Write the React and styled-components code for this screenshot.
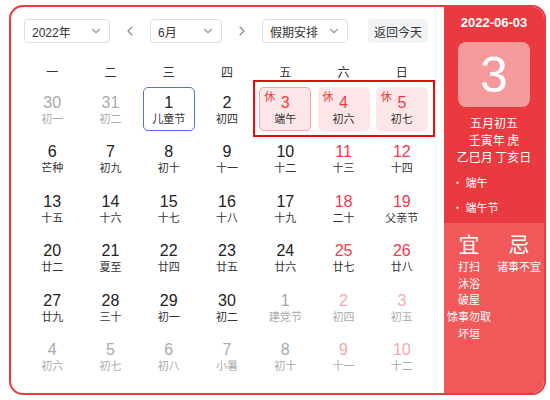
import styled, { createGlobalStyle } from "styled-components";
import { ChevronDown, ChevronLeft, ChevronRight } from "lucide-react";

const GlobalStyle = createGlobalStyle`
  body {
    margin: 0;
    background: #fff;
    font-family: "Liberation Sans", "Noto Sans CJK SC", sans-serif;
  }
`;

const Frame = styled.div`
  margin: 5px 0 0 9px;
  width: 537px;
  height: 390px;
  box-sizing: border-box;
  border: 2px solid #ea3a3f;
  border-radius: 14px;
  overflow: hidden;
  display: flex;
  background: #fff;
`;

const Main = styled.div`
  width: 433px;
  padding: 12px 0 0 12px;
  box-sizing: border-box;
`;

const Toolbar = styled.div`
  display: flex;
  align-items: center;
  height: 24px;
  padding-left: 1px;
`;

const Select = styled.div`
  width: ${({ $w }) => $w}px;
  height: 24px;
  box-sizing: border-box;
  border: 1px solid #dcdfe6;
  border-radius: 4px;
  display: flex;
  align-items: center;
  justify-content: space-between;
  padding: 0 6px 0 7px;
  font-size: 12px;
  color: #333;
  margin-right: ${({ $mr }) => $mr || 0}px;
  svg {
    color: #999;
  }
`;

const Arrow = styled.div`
  width: 40px;
  display: flex;
  justify-content: center;
  color: #888;
`;

const TodayButton = styled.div`
  width: 60px;
  height: 24px;
  border-radius: 4px;
  background: #f2f3f5;
  color: #333;
  font-size: 12px;
  display: flex;
  align-items: center;
  justify-content: center;
`;

const WeekHead = styled.div`
  display: grid;
  grid-template-columns: repeat(7, 1fr);
  width: 408px;
  margin-top: 19px;
  height: 18px;
  align-items: center;
  font-size: 12px;
  color: #333;
  text-align: center;
  font-family: "Noto Sans CJK SC", sans-serif;
`;

const Grid = styled.div`
  position: relative;
  display: grid;
  grid-template-columns: repeat(7, 1fr);
  grid-auto-rows: 44px;
  row-gap: 5.6px;
  width: 408px;
  margin-top: 7px;
`;

const Cell = styled.div`
  position: relative;
  justify-self: center;
  width: 52px;
  height: 44px;
  box-sizing: border-box;
  border-radius: 5px;
  text-align: center;
  background: ${({ $holiday }) => ($holiday ? "#fde6e7" : "transparent")};
  border: ${({ $mode }) =>
    $mode === "picked"
      ? "1.5px solid #4d6ff0"
      : $mode === "today"
      ? "1.5px solid #f2a4a6"
      : "1.5px solid transparent"};
  padding-top: 5.5px;
`;

const Num = styled.div`
  font-size: 16px;
  line-height: 18px;
  color: ${({ $c }) => $c};
`;

const Lunar = styled.div`
  font-size: 11px;
  line-height: 13px;
  font-family: "Noto Sans CJK SC", sans-serif;
  color: ${({ $c }) => $c};
`;

const Rest = styled.span`
  position: absolute;
  top: 2px;
  left: 4px;
  font-size: 11px;
  line-height: 12px;
  color: #f03a3f;
  font-family: "Noto Sans CJK SC", sans-serif;
`;

const Outline = styled.div`
  position: absolute;
  left: 230px;
  top: -7px;
  width: 182px;
  height: 57px;
  box-sizing: border-box;
  border: 2px solid #e80b0b;
  pointer-events: none;
`;

const Side = styled.div`
  width: 100px;
  display: flex;
  flex-direction: column;
  color: #fff;
  font-family: "Noto Sans CJK SC", sans-serif;
`;

const SideTop = styled.div`
  height: 216px;
  background: #ea3a3f;
  display: flex;
  flex-direction: column;
  align-items: center;
  margin-top: -2px;
  padding-top: 2px;
`;

const DateText = styled.div`
  margin-top: 8px;
  font-family: "Liberation Sans", sans-serif;
  font-weight: bold;
  font-size: 13px;
  line-height: 16px;
`;

const BigDay = styled.div`
  margin-top: 11px;
  width: 72px;
  height: 65px;
  border-radius: 8px;
  background: #f59a9b;
  display: flex;
  align-items: center;
  justify-content: center;
  font-family: "Liberation Sans", sans-serif;
  font-size: 50px;
`;

const Info = styled.div`
  margin-top: 7px;
  font-size: 12px;
  line-height: 17px;
  text-align: center;
`;

const Festivals = styled.div`
  align-self: stretch;
  padding: 10px 0 0 8px;
  font-size: 11px;
  display: flex;
  flex-direction: column;
  gap: 10px;
  line-height: 15px;
`;

const SideBottom = styled.div`
  flex: 1;
  background: #f05859;
  display: flex;
  padding-top: 5px;
  margin-bottom: -2px;
`;

const Column = styled.div`
  width: 50px;
  display: flex;
  flex-direction: column;
  align-items: center;
  font-size: 11px;
  line-height: 16.7px;
  white-space: nowrap;
`;

const Big = styled.div`
  font-size: 21px;
  line-height: 30px;
`;

const days = [
  [30, "初一", "prev"], [31, "初二", "prev"], [1, "儿童节", "", "picked"], [2, "初四"],
  [3, "端午", "", "today", true], [4, "初六", "", "", true], [5, "初七", "", "", true],
  [6, "芒种"], [7, "初九"], [8, "初十"], [9, "十一"], [10, "十二"], [11, "十三"], [12, "十四"],
  [13, "十五"], [14, "十六"], [15, "十七"], [16, "十八"], [17, "十九"], [18, "二十"], [19, "父亲节"],
  [20, "廿二"], [21, "夏至"], [22, "廿四"], [23, "廿五"], [24, "廿六"], [25, "廿七"], [26, "廿八"],
  [27, "廿九"], [28, "三十"], [29, "初一"], [30, "初二"], [1, "建党节", "next"], [2, "初四", "next"], [3, "初五", "next"],
  [4, "初六", "next"], [5, "初七", "next"], [6, "初八", "next"], [7, "小暑", "next"], [8, "初十", "next"], [9, "十一", "next"], [10, "十二", "next"],
];

const numColor = (other, weekend, holiday) => {
  if (holiday) return "#f03a3f";
  if (other) return weekend ? "#f6a9aa" : "#a9a9a9";
  return weekend ? "#f03a4a" : "#222";
};

const App = () => {
  return (
    <>
      <GlobalStyle />
      <Frame>
        <Main>
          <Toolbar>
            <Select $w={86}>
              2022年 <ChevronDown size={14} />
            </Select>
            <Arrow>
              <ChevronLeft size={16} strokeWidth={1.6} />
            </Arrow>
            <Select $w={72}>
              6月 <ChevronDown size={14} />
            </Select>
            <Arrow>
              <ChevronRight size={16} strokeWidth={1.6} />
            </Arrow>
            <Select $w={86} $mr={20}>
              假期安排 <ChevronDown size={14} />
            </Select>
            <TodayButton>返回今天</TodayButton>
          </Toolbar>

          <WeekHead>
            {["一", "二", "三", "四", "五", "六", "日"].map((d) => (
              <div key={d}>{d}</div>
            ))}
          </WeekHead>

          <Grid>
            {days.map(([n, lunar, other, mode, holiday], i) => {
              const weekend = i % 7 >= 5;
              return (
                <Cell key={i} $mode={mode} $holiday={holiday}>
                  {holiday && <Rest>休</Rest>}
                  <Num $c={numColor(other, weekend, holiday)}>{n}</Num>
                  <Lunar $c={other ? "#ababab" : "#333"}>{lunar}</Lunar>
                </Cell>
              );
            })}
            <Outline />
          </Grid>
        </Main>

        <Side>
          <SideTop>
            <DateText>2022-06-03</DateText>
            <BigDay>3</BigDay>
            <Info>
              <div>五月初五</div>
              <div>壬寅年 虎</div>
              <div>乙巳月 丁亥日</div>
            </Info>
            <Festivals>
              <div>• 端午</div>
              <div>• 端午节</div>
            </Festivals>
          </SideTop>
          <SideBottom>
            <Column>
              <Big>宜</Big>
              <div>打扫</div>
              <div>沐浴</div>
              <div>破屋</div>
              <div>馀事勿取</div>
              <div>坏垣</div>
            </Column>
            <Column>
              <Big>忌</Big>
              <div>诸事不宜</div>
            </Column>
          </SideBottom>
        </Side>
      </Frame>
    </>
  );
};

export default App;
